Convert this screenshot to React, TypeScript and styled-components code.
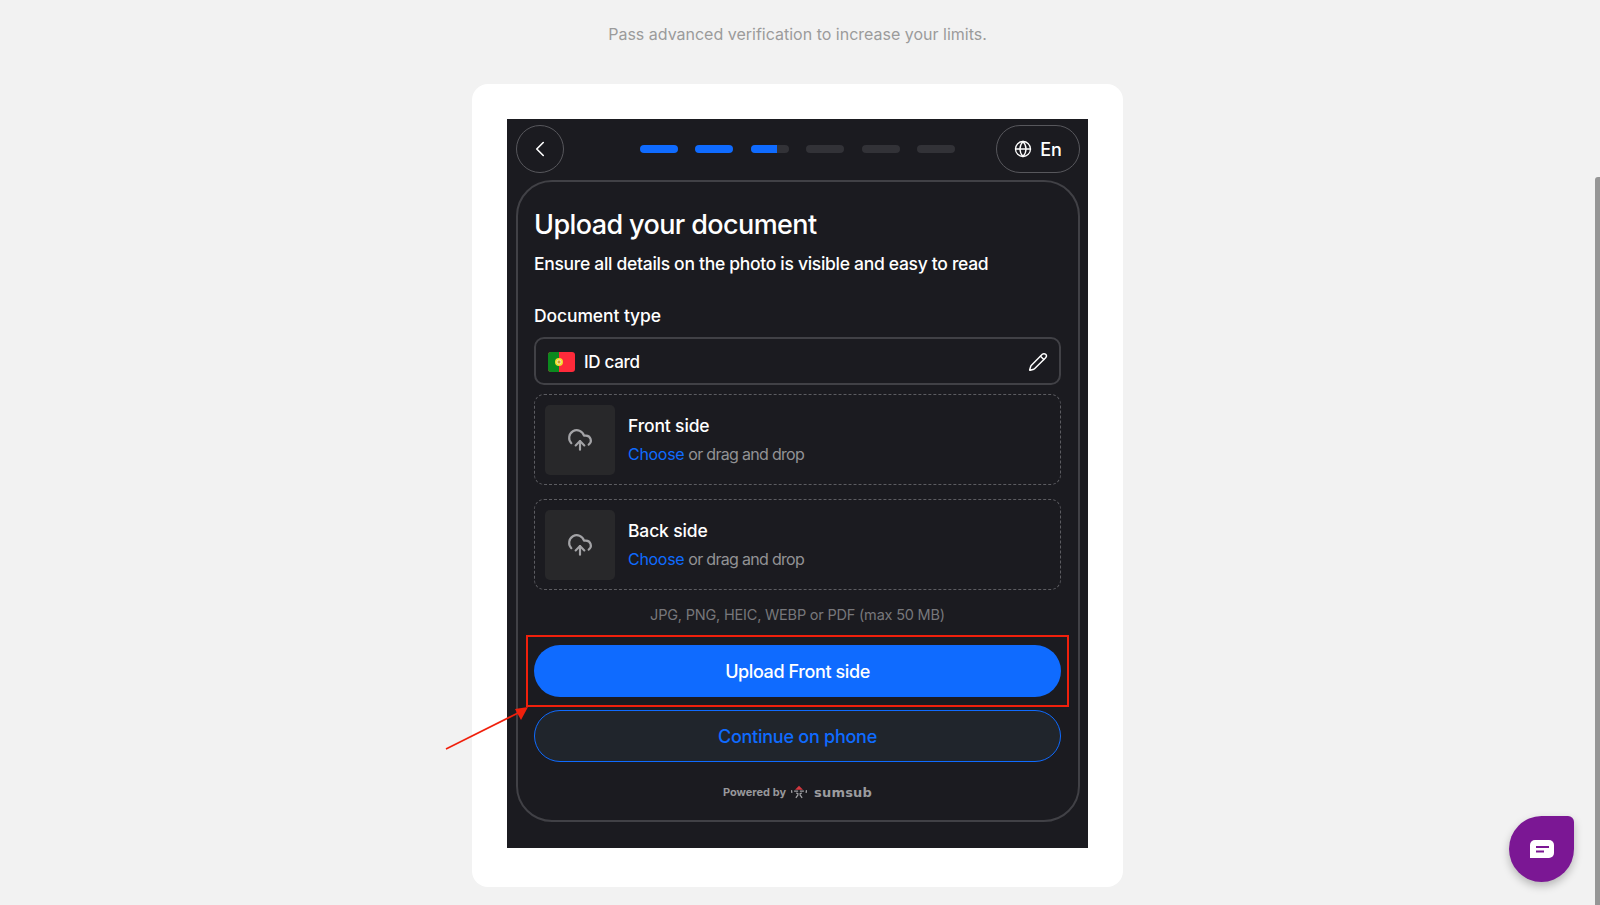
import React from 'react';
import styled, { createGlobalStyle } from 'styled-components';
import { ChevronLeft, CloudUpload, Globe, Pencil } from 'lucide-react';

const GlobalStyle = createGlobalStyle`
  html, body {
    margin: 0;
    height: 100%;
    overflow: hidden;
    background: #f2f2f2;
    font-family: Inter, "Liberation Sans", sans-serif;
  }
  * { box-sizing: border-box; }
`;

const Page = styled.div`
  position: relative;
  height: 905px;
  padding: 24px 5px 0 0;
  display: flex;
  flex-direction: column;
  align-items: center;
`;

const Lead = styled.p`
  margin: 0 0 40px;
  height: 20px;
  line-height: 20px;
  font-size: 16px;
  color: #9b9b9b;
`;

const WhiteCard = styled.div`
  width: 651px;
  height: 803px;
  padding: 35px 35px 39px 35px;
  background: #fff;
  border-radius: 16px;
`;

const Frame = styled.div`
  height: 729px;
  padding: 6px 8px 0 9px;
  background: #1b1b20;
  color: #fff;
`;

const TopBar = styled.div`
  display: flex;
  align-items: center;
  justify-content: space-between;
  height: 48px;
  margin-bottom: 7px;
`;

const RoundButton = styled.button`
  width: 48px;
  height: 48px;
  padding: 0;
  display: flex;
  align-items: center;
  justify-content: center;
  background: none;
  color: #fff;
  border: 1px solid #57575c;
  border-radius: 50%;
`;

const Steps = styled.div`
  display: flex;
  gap: 17.5px;
  margin-left: 35px;
`;

const Step = styled.div<{ $fill: number }>`
  width: 38px;
  height: 8px;
  border-radius: 4px;
  overflow: hidden;
  background: #323237;

  &::before {
    content: '';
    display: block;
    height: 100%;
    width: ${(p) => p.$fill}%;
    background: #0f6bff;
  }
`;

const LangButton = styled.button`
  width: 84px;
  height: 48px;
  padding: 0;
  display: flex;
  align-items: center;
  justify-content: center;
  gap: 8px;
  background: none;
  color: #fff;
  border: 1px solid #57575c;
  border-radius: 24px;
  font: 500 18px Inter, sans-serif;
`;

const Panel = styled.div`
  height: 642px;
  padding: 25px 17px 0 16px;
  border: 2px solid #414146;
  border-radius: 36px;
`;

const Title = styled.h1`
  margin: 0 0 8px;
  height: 36px;
  line-height: 36px;
  font-size: 27px;
  font-weight: 500;
  letter-spacing: -0.6px;
`;

const Subtitle = styled.p`
  margin: 0 0 27px;
  height: 26px;
  line-height: 26px;
  font-size: 17.5px;
  font-weight: 500;
  letter-spacing: -0.3px;
`;

const Label = styled.div`
  height: 24px;
  margin-bottom: 9px;
  line-height: 24px;
  font-size: 17.5px;
  font-weight: 500;
  letter-spacing: -0.1px;
`;

const TypeField = styled.div`
  display: flex;
  align-items: center;
  height: 48px;
  padding: 1px 11px 0 12px;
  border: 2px solid #414146;
  border-radius: 10px;
  font-size: 17px;
  font-weight: 500;
  letter-spacing: -0.3px;
  margin-bottom: 9px;
`;

const FlagIcon = styled.svg`
  width: 27px;
  height: 20px;
  margin-right: 9px;
  border-radius: 3px;
`;

const TypeName = styled.span`
  flex: 1;
`;

const DropList = styled.div`
  display: flex;
  flex-direction: column;
  gap: 14px;
`;

const DropZone = styled.div`
  display: flex;
  align-items: center;
  gap: 13px;
  height: 91px;
  padding: 0 10px;
  border: 1px dashed #5c5c61;
  border-radius: 10px;
`;

const Thumb = styled.div`
  flex: none;
  width: 70px;
  height: 70px;
  display: flex;
  align-items: center;
  justify-content: center;
  background: #28282a;
  border-radius: 5px;
  color: #a3a3a6;
`;

const SideName = styled.div`
  height: 24px;
  margin-bottom: 4px;
  line-height: 24px;
  font-size: 17.5px;
  font-weight: 500;
  letter-spacing: -0.15px;
`;

const Hint = styled.div`
  height: 24px;
  line-height: 24px;
  font-size: 16px;
  letter-spacing: -0.7px;
  color: #929295;
`;

const Choose = styled.span`
  color: #0f6bff;
  margin-right: 4px;
  letter-spacing: -0.3px;
`;

const Formats = styled.div`
  height: 24px;
  margin: 13px 0 18px;
  text-align: center;
  line-height: 24px;
  font-size: 14.5px;
  letter-spacing: -0.2px;
  color: #77777b;
`;

const PrimaryButton = styled.button`
  display: block;
  width: 100%;
  height: 52px;
  margin-bottom: 13px;
  background: #0f6bff;
  color: #fff;
  border: none;
  border-radius: 26px;
  font: 500 18px Inter, sans-serif;
  letter-spacing: -0.4px;
`;

const SecondaryButton = styled.button`
  display: block;
  width: 100%;
  height: 52px;
  background: #20252c;
  color: #0f6bff;
  border: 1px solid #0f6bff;
  border-radius: 26px;
  font: 500 18px Inter, sans-serif;
  letter-spacing: -0.25px;
`;

const Powered = styled.div`
  display: flex;
  align-items: center;
  justify-content: center;
  gap: 5px;
  height: 20px;
  margin-top: 20px;
  color: #98989b;
  font-size: 11px;
  font-weight: 700;
`;

const SumsubWord = styled.span`
  margin-left: 2px;
  font-family: "DejaVu Sans", sans-serif;
  font-size: 13px;
  font-weight: 700;
  letter-spacing: 0.2px;
  color: #9c9c9f;
`;

const Highlight = styled.div`
  position: absolute;
  left: 526px;
  top: 635px;
  width: 543px;
  height: 72px;
  border: 2px solid #f0200c;
  pointer-events: none;
`;

const Arrow = styled.svg`
  position: absolute;
  left: 440px;
  top: 700px;
  width: 96px;
  height: 56px;
  pointer-events: none;
`;

const ChatButton = styled.div`
  position: absolute;
  left: 1509px;
  top: 816px;
  width: 65px;
  height: 66px;
  display: flex;
  align-items: center;
  justify-content: center;
  background: #7b1794;
  border-radius: 50% 6px 50% 50%;
  box-shadow: 0 4px 8px rgba(0, 0, 0, 0.25);
`;

const ScrollThumb = styled.div`
  position: absolute;
  right: 0;
  top: 177px;
  bottom: 0;
  width: 5px;
  border-radius: 3px 0 0 0;
  background: #969696;
`;

const UploadRow = ({ name }: { name: string }) => (
  <DropZone>
    <Thumb>
      <CloudUpload size={26} strokeWidth={2} />
    </Thumb>
    <div>
      <SideName>{name}</SideName>
      <Hint>
        <Choose>Choose</Choose>or drag and drop
      </Hint>
    </div>
  </DropZone>
);

const App = () => (
  <Page>
    <GlobalStyle />
    <Lead>Pass advanced verification to increase your limits.</Lead>
    <WhiteCard>
      <Frame>
        <TopBar>
          <RoundButton>
            <ChevronLeft size={26} strokeWidth={1.5} />
          </RoundButton>
          <Steps>
            <Step $fill={100} />
            <Step $fill={100} />
            <Step $fill={70} />
            <Step $fill={0} />
            <Step $fill={0} />
            <Step $fill={0} />
          </Steps>
          <LangButton>
            <Globe size={18} strokeWidth={1.75} />
            En
          </LangButton>
        </TopBar>
        <Panel>
          <Title>Upload your document</Title>
          <Subtitle>Ensure all details on the photo is visible and easy to read</Subtitle>
          <Label>Document type</Label>
          <TypeField>
            <FlagIcon viewBox="0 0 27 20">
              <rect width="27" height="20" fill="#ff2a3a" />
              <rect width="11" height="20" fill="#0b8a1e" />
              <circle cx="11" cy="10" r="4" fill="#f3df2a" />
              <circle cx="11" cy="10" r="2" fill="#d8a02a" stroke="#fff" strokeWidth="0.6" />
            </FlagIcon>
            <TypeName>ID card</TypeName>
            <Pencil size={20} strokeWidth={1.75} />
          </TypeField>
          <DropList>
            <UploadRow name="Front side" />
            <UploadRow name="Back side" />
          </DropList>
          <Formats>JPG, PNG, HEIC, WEBP or PDF (max 50 MB)</Formats>
          <PrimaryButton>Upload Front side</PrimaryButton>
          <SecondaryButton>Continue on phone</SecondaryButton>
          <Powered>
            Powered by
            <svg width="16" height="14" viewBox="0 0 18 14">
              <path d="M9 0 L13.5 4.5 H4.5 Z" fill="#d5383f" />
              <path d="M3.5 6 H8 M10 6 H14.5 M6 8 L8.5 9.5 M12 8 L9.5 9.5 M8 10 L5.5 13.5 M10 10 L12.5 13.5 M0.5 5 L1 8 M17.5 5 L17 8" stroke="#a0a0a3" strokeWidth="1.5" fill="none" />
            </svg>
            <SumsubWord>sumsub</SumsubWord>
          </Powered>
        </Panel>
      </Frame>
    </WhiteCard>
    <Highlight />
    <Arrow viewBox="0 0 96 56">
      <path d="M6 49 L80 12" stroke="#f0200c" strokeWidth="1.6" fill="none" />
      <path d="M88 7 L75 9 L81 20 Z" fill="#f0200c" />
    </Arrow>
    <ChatButton>
      <svg width="26" height="20" viewBox="0 0 26 20">
        <path d="M6 1 H20 A5 5 0 0 1 25 6 V14 A5 5 0 0 1 20 19 H1 V6 A5 5 0 0 1 6 1 Z" fill="#fff" />
        <path d="M7 8 H20 M7 12.5 H15" stroke="#7b1794" strokeWidth="2" />
      </svg>
    </ChatButton>
    <ScrollThumb />
  </Page>
);

export default App;
